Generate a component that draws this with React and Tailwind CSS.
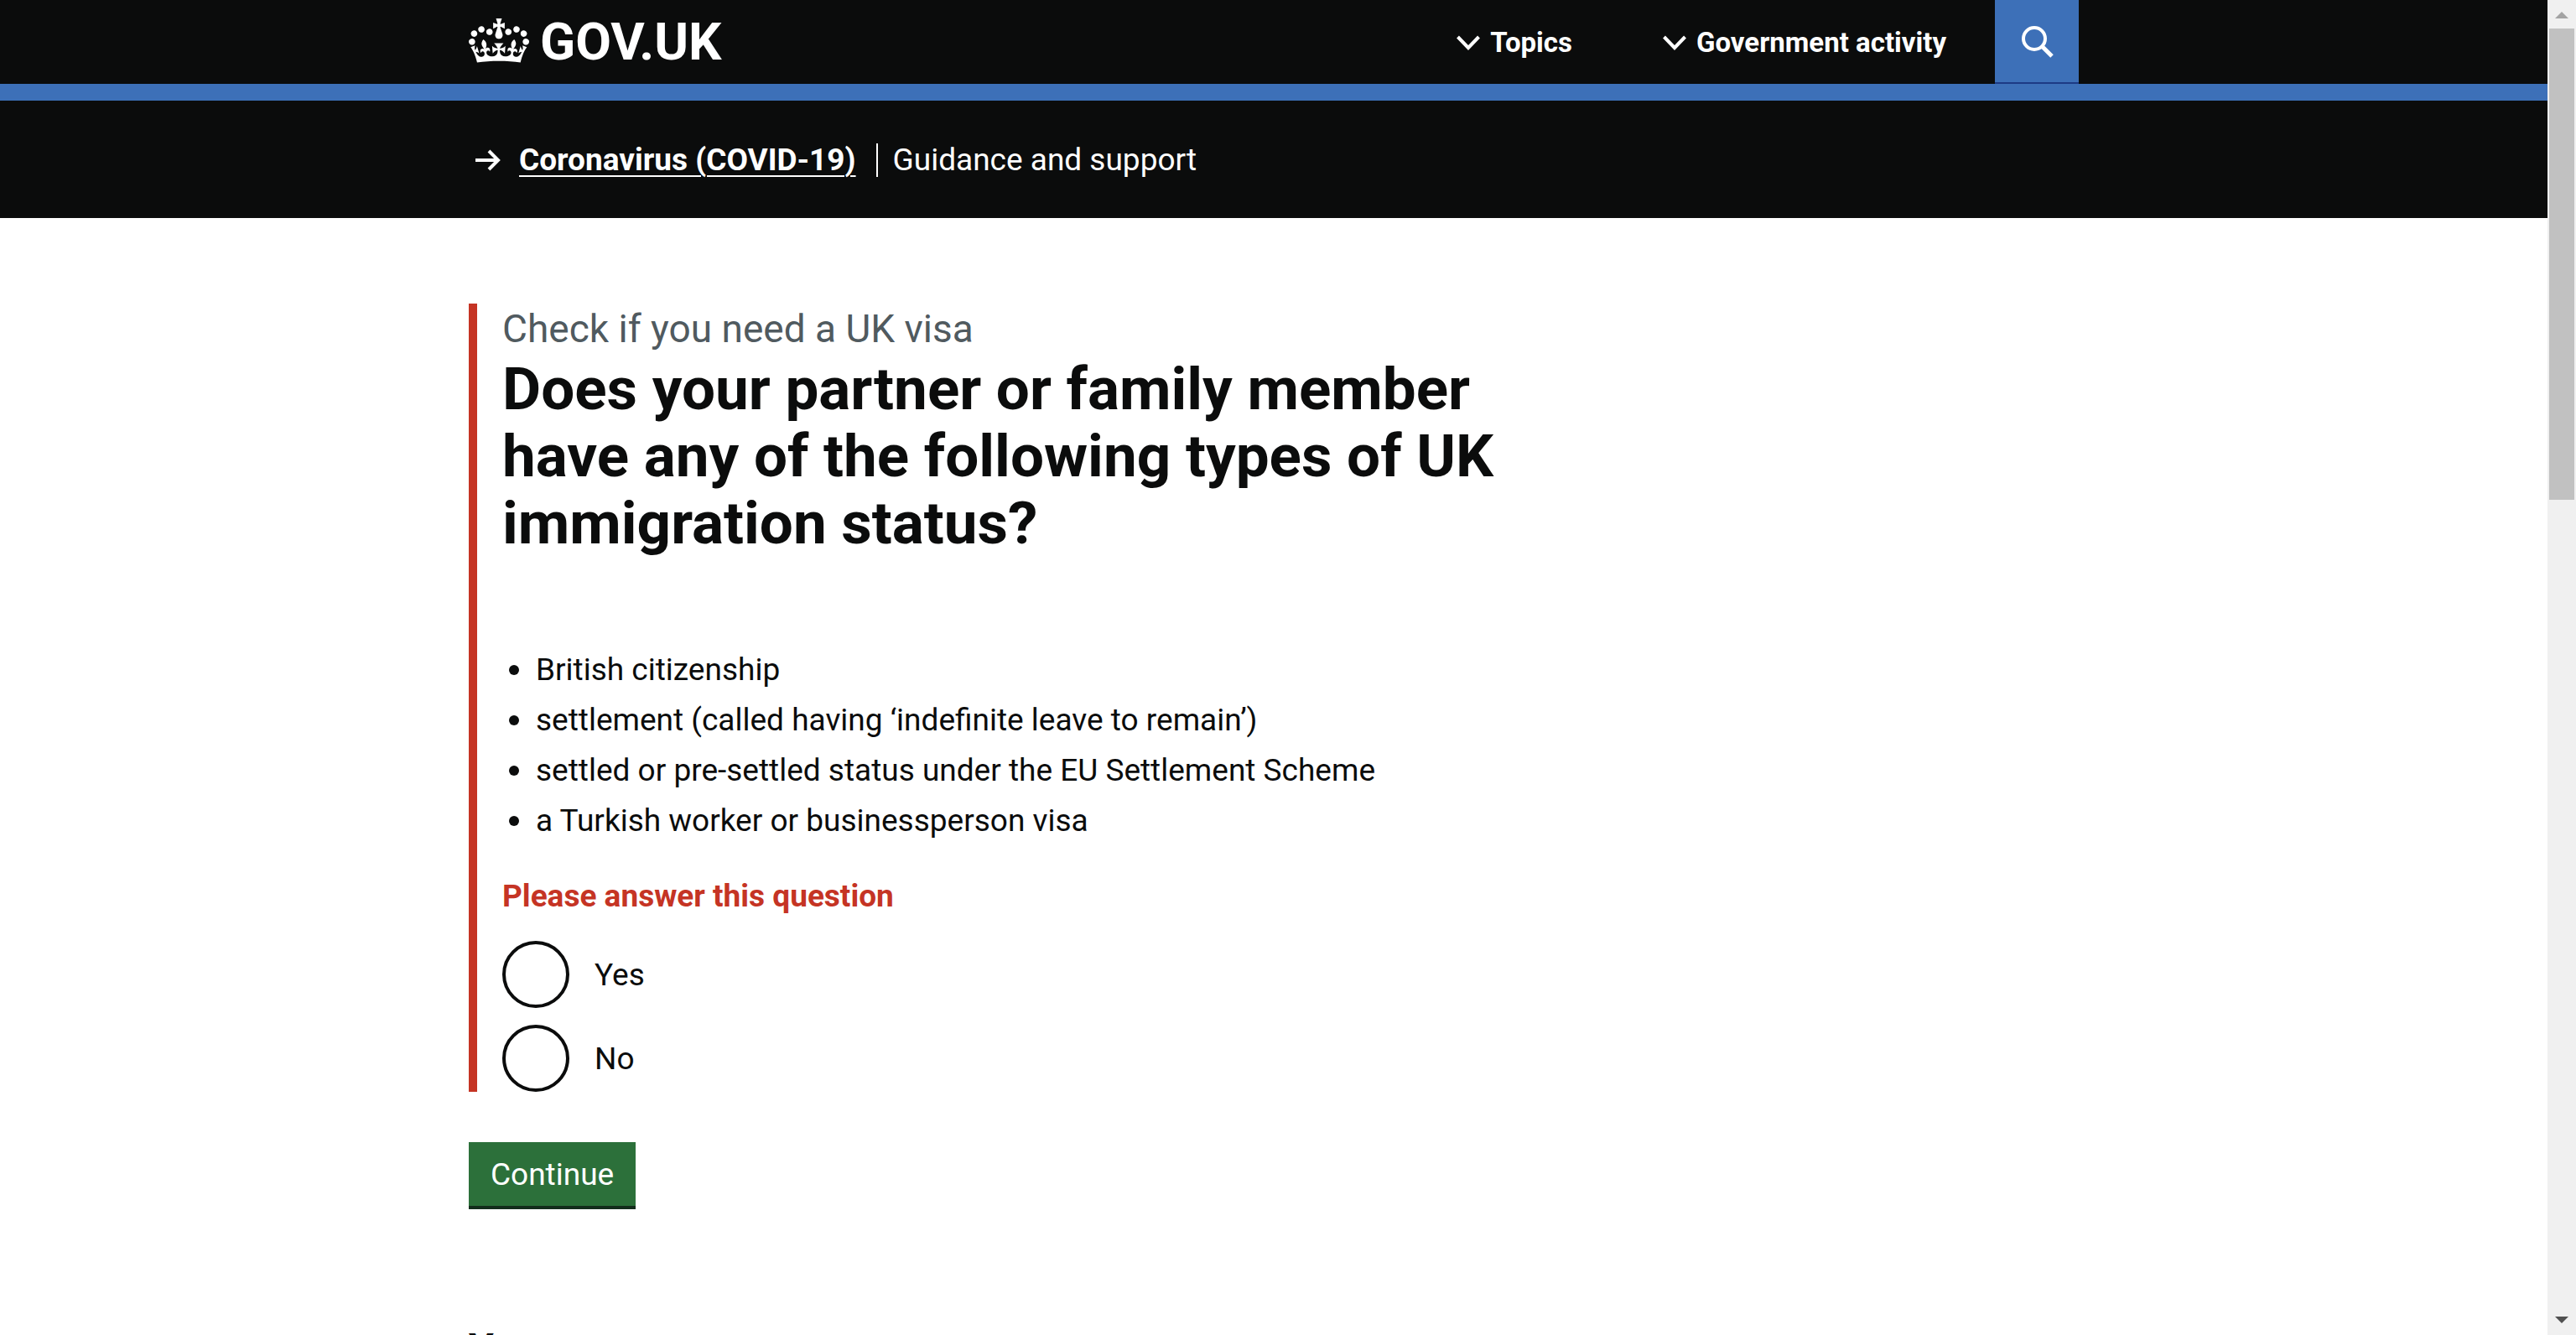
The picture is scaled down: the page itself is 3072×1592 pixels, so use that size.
const statuses = [
  "British citizenship",
  "settlement (called having ‘indefinite leave to remain’)",
  "settled or pre-settled status under the EU Settlement Scheme",
  "a Turkish worker or businessperson visa",
];

function Crown() {
  return (
    <svg viewBox="0 0 132 97" className="h-[53px] w-[72px]" fill="currentColor" aria-hidden="true">
      <path
        fillRule="evenodd"
        d="M25 30.2c3.5 1.5 7.7-.2 9.1-3.7 1.5-3.6-.2-7.8-3.9-9.2-3.6-1.4-7.6.3-9.1 3.9-1.4 3.5.3 7.5 3.9 9zM9 39.5c3.6 1.5 7.8-.2 9.2-3.7 1.5-3.6-.2-7.8-3.9-9.1-3.6-1.5-7.6.2-9.1 3.8-1.4 3.5.3 7.5 3.8 9zM4.4 57.2c3.5 1.5 7.7-.2 9.1-3.8 1.5-3.6-.2-7.7-3.9-9.1-3.5-1.5-7.6.3-9.1 3.8-1.4 3.5.3 7.6 3.9 9.1zm38.3-21.4c3.5 1.5 7.7-.2 9.1-3.8 1.5-3.6-.2-7.7-3.9-9.1-3.6-1.5-7.6.3-9.1 3.8-1.3 3.6.4 7.7 3.9 9.1zm64.4-5.6c-3.6 1.5-7.8-.2-9.1-3.7-1.5-3.6.2-7.8 3.8-9.2 3.6-1.4 7.7.3 9.2 3.9 1.3 3.5-.4 7.5-3.9 9zm15.9 9.3c-3.6 1.5-7.7-.2-9.1-3.7-1.5-3.6.2-7.8 3.7-9.1 3.6-1.5 7.7.2 9.2 3.8 1.5 3.5-.3 7.5-3.8 9zm4.7 17.7c-3.6 1.5-7.8-.2-9.2-3.8-1.5-3.6.2-7.7 3.9-9.1 3.6-1.5 7.7.3 9.2 3.8 1.3 3.5-.4 7.6-3.9 9.1zM89.3 35.8c-3.6 1.5-7.8-.2-9.2-3.8-1.4-3.6.2-7.7 3.9-9.1 3.6-1.5 7.7.3 9.2 3.8 1.4 3.6-.3 7.7-3.9 9.1zM69.7 17.7l8.9 4.7V9.3l-8.9 2.8c-.2-.3-.5-.6-.9-.9L72.4 0H59.6l3.5 11.2c-.3.3-.6.5-.9.9l-8.8-2.8v13.1l8.8-4.7c.3.3.6.7.9.9l-5 15.4v.1c-.2.8-.4 1.6-.4 2.4 0 4.1 3.1 7.5 7 8.1h.2c.3 0 .7.1 1 .1.4 0 .7 0 1-.1h.2c4-.6 7.1-4.1 7.1-8.1 0-.8-.1-1.7-.4-2.4V34l-5.1-15.4c.4-.2.7-.6 1-.9zM66 92.8c16.9 0 32.8 1.1 47.1 3.2 4-16.9 8.9-26.7 14-33.5l-9.6-3.4c1 4.9 1.1 7.2 0 10.2-1.5-1.4-3-4.3-4.2-8.7L108.6 76c2.8-2 5-3.2 7.5-3.3-4.4 9.4-10 11.9-13.6 11.2-4.3-.8-6.3-4.6-5.6-7.9 1-4.7 5.7-5.9 8-.5 4.3-8.7-3-11.4-7.6-8.8 7.1-7.2 7.9-13.5 2.1-21.1-8 6.1-8.1 12.3-4.5 20.8-4.7-5.4-12.1-2.5-9.5 6.2 3.4-5.2 7.9-2 7.2 3.1-.6 4.3-6.4 7.8-13.5 7.2-10.3-.9-10.9-8-11.2-13.8 2.5-.5 7.1 1.8 11 7.3L80.2 60c-4.1 4.4-8 5.3-12.3 5.4 1.4-4.4 8-11.6 8-11.6H55.5s6.4 7.2 7.9 11.6c-4.2-.1-8-1-12.3-5.4l1.4 16.4c3.9-5.5 8.5-7.7 10.9-7.3-.3 5.8-.9 12.8-11.1 13.8-7.2.6-12.9-2.9-13.5-7.2-.7-5 3.8-8.3 7.1-3.1 2.7-8.7-4.6-11.6-9.4-6.2 3.7-8.5 3.6-14.7-4.6-20.8-5.8 7.6-5 13.9 2.2 21.1-4.7-2.6-11.9.1-7.7 8.8 2.3-5.5 7.1-4.2 8.1.5.7 3.3-1.3 7.1-5.7 7.9-3.5.7-9-1.8-13.5-11.2 2.5.1 4.7 1.3 7.5 3.3l-4.7-15.4c-1.2 4.4-2.7 7.2-4.3 8.7-1.1-3-.9-5.3 0-10.2l-9.5 3.4c5 6.9 9.9 16.7 14 33.5 14.8-2.1 30.8-3.2 47.7-3.2z"
      />
    </svg>
  );
}

function MenuButton({ children }) {
  return (
    <button type="button" className="flex items-center gap-3 text-[33px] leading-10 font-bold">
      <svg viewBox="0 0 28 18" className="h-[18px] w-7" fill="none" stroke="currentColor" strokeWidth="4" aria-hidden="true">
        <path d="M1.5 2 14 15 26.5 2" />
      </svg>
      {children}
    </button>
  );
}

function Header() {
  return (
    <header className="border-b-20 border-[#3d70b8] bg-[#0b0c0c] text-white">
      <div className="mx-auto flex h-[100px] max-w-[1920px] items-stretch">
        <a href="#home" className="mr-auto flex items-center gap-[13px]">
          <span className="pb-1">
            <Crown />
          </span>
          <span className="text-[62px] leading-[80px] font-bold">GOV.UK</span>
        </a>
        <nav className="flex items-center gap-[108px] pt-[2px] pr-[58px]" aria-label="Main">
          <MenuButton>Topics</MenuButton>
          <MenuButton>Government activity</MenuButton>
        </nav>
        <button
          type="button"
          aria-label="Search GOV.UK"
          className="flex w-[100px] items-center justify-center border-b-2 border-[#1d3a85] bg-[#3d70b8]"
        >
          <svg viewBox="0 0 40 40" className="size-10" fill="none" stroke="currentColor" strokeWidth="4" aria-hidden="true">
            <circle cx="17" cy="17" r="13" />
            <path d="M26 26 38 38" strokeWidth="5" />
          </svg>
        </button>
      </div>
    </header>
  );
}

function CovidBar() {
  return (
    <div className="bg-[#0b0c0c] pt-[46px] pb-11 text-[37px] leading-[50px] text-white">
      <div className="mx-auto flex max-w-[1920px] items-center pl-2">
        <svg viewBox="0 0 30 26" className="mr-[22px] h-[26px] w-[30px]" fill="none" stroke="currentColor" strokeWidth="4" aria-hidden="true">
          <path d="M0 13H27M16 2 27 13 16 24" />
        </svg>
        <a href="#coronavirus" className="font-bold underline decoration-2 underline-offset-6">
          Coronavirus (COVID-19)
        </a>
        <span className="ml-6 h-10 border-l-2 border-white" />
        <span className="ml-[18px]">Guidance and support</span>
      </div>
    </div>
  );
}

function Radio({ id, label }) {
  return (
    <div className="flex items-center">
      <input id={id} type="radio" name="status" className="size-20 appearance-none rounded-full border-4 border-[#0b0c0c] checked:bg-[#0b0c0c]" />
      <label htmlFor={id} className="px-[30px] pt-[2px] text-[37px] leading-[50px]">
        {label}
      </label>
    </div>
  );
}

function Question() {
  return (
    <form>
      <fieldset className="max-w-[1260px] border-l-10 border-[#c53424] pl-[30px]" aria-describedby="status-error">
        <legend className="contents">
          <span className="block text-[46px] leading-[60px] text-[#505a5f]">Check if you need a UK visa</span>
          <h1 className="pt-[2px] text-[71px] leading-[80px] font-bold">
            Does your partner or family member have any of the following types of UK immigration status?
          </h1>
        </legend>
        <ul className="mt-[110px] pl-2 text-[37px] leading-[50px]">
          {statuses.map((status) => (
            <li key={status} className="mb-[10px] flex items-center gap-5">
              <span className="size-3 rounded-full bg-[#0b0c0c]" />
              {status}
            </li>
          ))}
        </ul>
        <p id="status-error" className="mt-10 mb-7 text-[37px] leading-[50px] font-bold text-[#c53424]">
          Please answer this question
        </p>
        <div className="flex flex-col gap-5">
          <Radio id="status-yes" label="Yes" />
          <Radio id="status-no" label="No" />
        </div>
      </fieldset>
      <button
        type="button"
        className="mt-[60px] border-b-4 border-[#132d1c] bg-[#2c703a] px-[26px] pt-[14px] pb-3 text-[37px] leading-[50px] text-white"
      >
        Continue
      </button>
    </form>
  );
}

function Scrollbar() {
  return (
    <div className="flex w-[34px] shrink-0 flex-col items-center bg-[#f0f0f0]" aria-hidden="true">
      <svg viewBox="0 0 34 34" className="size-[34px] shrink-0">
        <path d="M9 22 17 14 25 22z" fill="#a3a3a3" />
      </svg>
      <div className="h-[562px] w-[30px] bg-[#c1c1c1]" />
      <svg viewBox="0 0 34 34" className="mt-auto size-[34px] shrink-0">
        <path d="M9 12 17 20 25 12z" fill="#505050" />
      </svg>
    </div>
  );
}

export default function App() {
  return (
    <div className="flex h-screen overflow-hidden bg-white font-['Roboto',sans-serif] text-[#0b0c0c]">
      <div className="min-w-0 grow overflow-hidden">
        <Header />
        <CovidBar />
        <main className="mx-auto max-w-[1920px] pt-[102px]">
          <Question />
          <h2 className="mt-[136px] text-[48px] leading-[60px] font-bold">Your answers</h2>
        </main>
      </div>
      <Scrollbar />
    </div>
  );
}
